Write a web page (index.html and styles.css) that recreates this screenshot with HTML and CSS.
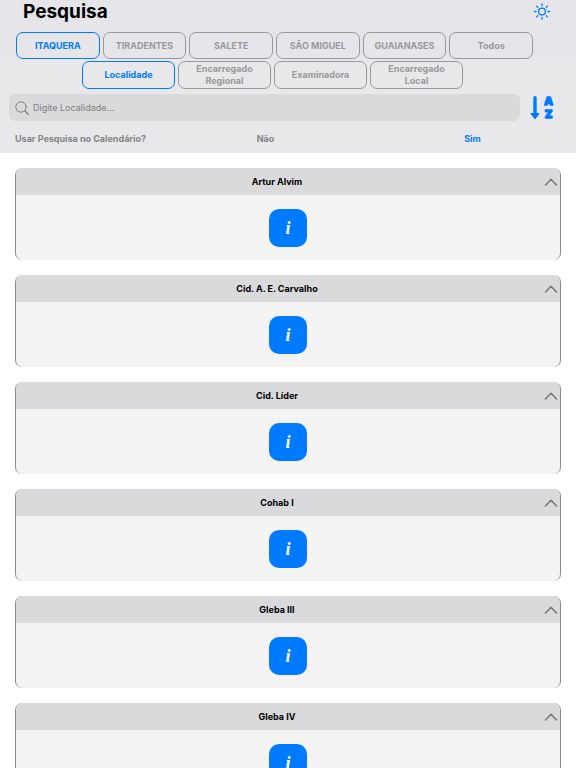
FILE: index.html
```html
<!DOCTYPE html>
<html lang="pt-BR">
  <head>
    <meta charset="UTF-8" />
    <meta name="viewport" content="width=device-width, initial-scale=1.0" />
    <title>Pesquisa</title>
    <link rel="stylesheet" href="styles.css">
  </head>
  <body>
    <svg class="symbols" aria-hidden="true">
      <symbol id="chevron" viewBox="0 0 14 8">
        <path d="M1.5 7 L7 1.3 L12.5 7" fill="none" stroke="currentColor" stroke-width="1.6" stroke-linecap="round" stroke-linejoin="round" />
      </symbol>
    </svg>
    <header class="header">
      <div class="top">
        <div class="title-bar">
          <h1 class="title">Pesquisa</h1>
          <button class="icon-button theme" aria-label="Tema">
            <svg width="18" height="18" viewBox="0 0 18 18" fill="none" stroke="currentColor" stroke-width="1.3" stroke-linecap="round">
              <circle cx="9" cy="8.5" r="3.4" />
              <path d="M9 .9v1.6M9 14.5v1.6M1.4 8.5h1.6M15 8.5h1.6M3.6 3.1l1.1 1.1M13.3 12.8l1.1 1.1M3.6 13.9l1.1-1.1M13.3 4.2l1.1-1.1" />
            </svg>
          </button>
        </div>
        <nav class="tabs sectors">
          <button class="tab active">ITAQUERA</button>
          <button class="tab">TIRADENTES</button>
          <button class="tab">SALETE</button>
          <button class="tab">SÃO MIGUEL</button>
          <button class="tab">GUAIANASES</button>
          <button class="tab">Todos</button>
        </nav>
      </div>
      <nav class="tabs filters">
        <button class="tab active">Localidade</button>
        <button class="tab">Encarregado Regional</button>
        <button class="tab">Examinadora</button>
        <button class="tab">Encarregado Local</button>
      </nav>
      <div class="search-row">
        <label class="search">
          <svg width="14" height="14" viewBox="0 0 14 14" fill="none" stroke="currentColor" stroke-linecap="round">
            <circle cx="6" cy="6" r="5.2" stroke-width="0.9" />
            <path d="M9.8 9.8L13.2 13.2" stroke-width="1.3" />
          </svg>
          <input class="search-input" type="text" placeholder="Digite Localidade..." aria-label="Pesquisar localidade">
        </label>
        <button class="icon-button sort" aria-label="Ordenar de A a Z">
          <svg width="25" height="29" viewBox="0 0 25 29" fill="currentColor">
            <path d="M5 4.8 V21" fill="none" stroke="currentColor" stroke-width="3.4" stroke-linecap="round" />
            <path d="M1.2 20.6 H8.8 L5 25.4 Z" stroke="currentColor" stroke-width="1.4" stroke-linejoin="round" />
            <text class="sort-letter" x="18.5" y="12">A</text>
            <text class="sort-letter" x="18.5" y="25.4">Z</text>
          </svg>
        </button>
      </div>
      <div class="calendar" role="radiogroup" aria-labelledby="calendar-label">
        <span id="calendar-label">Usar Pesquisa no Calendário?</span>
        <label class="option"><input type="radio" name="calendar"><span>Não</span></label>
        <label class="option"><input type="radio" name="calendar" checked><span>Sim</span></label>
      </div>
    </header>

    <main class="list">
      <section class="card">
        <button class="card-header"><span class="card-title">Artur Alvim</span><svg class="chevron"><use href="#chevron" /></svg></button>
        <div class="card-body"><button class="info">i</button></div>
      </section>
      <section class="card">
        <button class="card-header"><span class="card-title">Cid. A. E. Carvalho</span><svg class="chevron"><use href="#chevron" /></svg></button>
        <div class="card-body"><button class="info">i</button></div>
      </section>
      <section class="card">
        <button class="card-header"><span class="card-title">Cid. Líder</span><svg class="chevron"><use href="#chevron" /></svg></button>
        <div class="card-body"><button class="info">i</button></div>
      </section>
      <section class="card">
        <button class="card-header"><span class="card-title">Cohab I</span><svg class="chevron"><use href="#chevron" /></svg></button>
        <div class="card-body"><button class="info">i</button></div>
      </section>
      <section class="card">
        <button class="card-header"><span class="card-title">Gleba III</span><svg class="chevron"><use href="#chevron" /></svg></button>
        <div class="card-body"><button class="info">i</button></div>
      </section>
      <section class="card">
        <button class="card-header"><span class="card-title">Gleba IV</span><svg class="chevron"><use href="#chevron" /></svg></button>
        <div class="card-body"><button class="info">i</button></div>
      </section>
    </main>
  </body>
</html>
```

FILE: styles.css
```css
* {
  box-sizing: border-box;
}
html {
  scrollbar-width: none;
}
body {
  margin: 0;
  background-color: white;
  color: black;
  font-family: Inter, "Liberation Sans", sans-serif;
  font-size: 9px;
}
button {
  margin: 0;
  padding: 0;
  border: none;
  background: none;
  color: inherit;
  font: inherit;
  cursor: pointer;
}
.symbols {
  display: none;
}
.header {
  background-color: #e8e8ea;
}
.top {
  background-color: #e5e5ea;
}
.title-bar {
  display: flex;
  align-items: center;
  justify-content: space-between;
  height: 24px;
  margin-bottom: 8px;
  padding: 0 25px 0 23px;
}
.title {
  margin: 0;
  font-size: 19px;
  line-height: 24px;
  font-weight: 700;
}
.icon-button {
  display: flex;
  color: #007aff;
}
.tabs {
  display: flex;
  gap: 3px;
}
.sectors {
  padding: 0 43px 0 16px;
}
.filters {
  justify-content: center;
  padding: 2px 31px 0 0;
}
.tab {
  flex: 1;
  height: 27px;
  border: 1px solid #99999d;
  border-radius: 7px;
  color: #99999d;
  font-weight: 700;
  line-height: 12px;
}
.filters .tab {
  flex: 0 0 93px;
  height: 28px;
  padding: 0 14px;
}
.tab.active {
  border-color: #007aff;
  color: #007aff;
}
.search-row {
  display: flex;
  align-items: center;
  gap: 10px;
  padding: 4px 21px 3px 9px;
}
.search {
  flex: 1;
  display: flex;
  align-items: center;
  gap: 4px;
  height: 27px;
  padding: 0 6px;
  border-radius: 6px;
  background-color: #dadadc;
  color: #77777a;
}
.search-input {
  flex: 1;
  padding: 0;
  border: none;
  outline: none;
  background: none;
  font: inherit;
}
.search-input::placeholder {
  color: #7f7f83;
  opacity: 1;
}
.sort-letter {
  font-size: 11px;
  font-weight: 900;
  text-anchor: middle;
  stroke: currentColor;
  stroke-width: 1.4px;
  stroke-linejoin: round;
}
.calendar {
  display: grid;
  grid-template-columns: 147px 1fr 1fr;
  align-items: center;
  height: 28px;
  padding-left: 15px;
  color: #838387;
  font-weight: 700;
  line-height: 12px;
  white-space: nowrap;
}
.option {
  text-align: center;
  cursor: pointer;
}
.option input {
  position: absolute;
  appearance: none;
  margin: 0;
}
.option input:checked + span {
  color: #007aff;
}
.list {
  display: flex;
  flex-direction: column;
  gap: 15px;
  padding: 15px;
}
.card {
  overflow: hidden;
  border: solid #8a8a8e;
  border-width: 0 1px;
  border-radius: 7px;
  background-color: #f3f3f3;
}
.card-header {
  display: flex;
  align-items: center;
  width: 100%;
  height: 27px;
  padding-right: 2px;
  background-color: #dadadc;
}
.card-title {
  flex: 1;
  font-weight: 700;
}
.chevron {
  width: 14px;
  height: 8px;
  margin-left: 6px;
  color: #7a7a7d;
}
.card-body {
  display: flex;
  align-items: center;
  justify-content: center;
  height: 65px;
}
.info {
  width: 38px;
  height: 38px;
  padding-top: 2px;
  border-radius: 10px;
  background-color: #007aff;
  color: white;
  font: italic bold 18px "Liberation Serif", serif;
}
```
